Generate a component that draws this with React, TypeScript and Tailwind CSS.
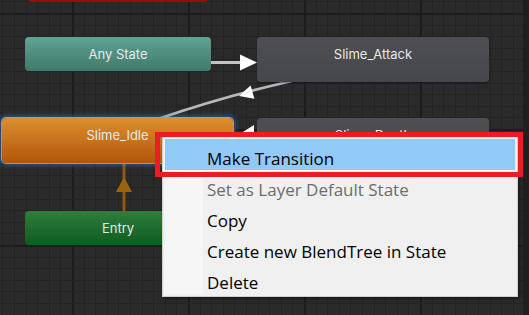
import React from 'react';

const MINOR = 11.6;

function Grid() {
  const xs: number[] = [];
  const ys: number[] = [];
  for (let x = 2.4; x < 529; x += MINOR) xs.push(x);
  for (let y = 1.4; y < 315; y += MINOR) ys.push(y);
  // every 10th minor line is a major line (x=72, y=13 are majors)
  const isMajorX = (x: number) => Math.abs(((x - 72) / (MINOR * 10)) - Math.round((x - 72) / (MINOR * 10))) < 0.01;
  const isMajorY = (y: number) => Math.abs(((y - 13) / (MINOR * 10)) - Math.round((y - 13) / (MINOR * 10))) < 0.01;
  return (
    <svg className="absolute inset-0" width="529" height="315">
      {xs.map((x) => (
        <rect key={'x' + x} x={Math.round(x)} y={0} width={isMajorX(x) ? 2 : 1} height={315} fill={isMajorX(x) ? '#1c1c1c' : '#232323'} />
      ))}
      {ys.map((y) => (
        <rect key={'y' + y} x={0} y={Math.round(y)} width={529} height={isMajorY(y) ? 2 : 1} fill={isMajorY(y) ? '#1c1c1c' : '#232323'} />
      ))}
    </svg>
  );
}

function Transitions() {
  return (
    <svg className="absolute inset-0" width="529" height="315">
      {/* Any State -> Slime_Attack */}
      <line x1="211" y1="62.5" x2="246" y2="62.5" stroke="#c4c4c4" strokeWidth="3" />
      <polygon points="257,62.5 240,54.5 240,70.5" fill="#ffffff" />
      {/* Slime_Attack -> Slime_Idle */}
      <path d="M292 81 Q225 96 158 119" stroke="#b8b8b8" strokeWidth="2.5" fill="none" />
      <polygon points="239,96 254.4,98.8 250.6,85.4" fill="#ffffff" />
      {/* Slime_Idle <- second state */}
      <polygon points="238,135 254,125 254,145" fill="#ffffff" />
      {/* Entry -> Slime_Idle */}
      <line x1="124" y1="164" x2="124" y2="211" stroke="#8e5b0e" strokeWidth="3" />
      <polygon points="124,177 116,192 132,192" fill="#9a630f" />
    </svg>
  );
}

const label = "text-[13px] leading-[34px] text-center text-[#e8e8e8] font-['Inter','Noto_Sans',sans-serif]";

export default function App() {
  return (
    <div className="relative w-[529px] h-[315px] overflow-hidden bg-[#2a2a2a]">
      <Grid />
      <div className="absolute right-0 top-0 w-[6px] h-full bg-[#1f1f1f]" />
      <Transitions />

      {/* off-screen state peeking in at the top */}
      <div className="absolute left-[28px] top-[-32px] w-[180px] h-[34px] rounded-[4px] bg-[#9b0d0d]" />

      <div className={`absolute left-[25px] top-[37px] w-[186px] h-[34px] rounded-[4px] bg-gradient-to-b from-[#62a393] to-[#3e7a6b] ${label}`}>
        Any State
      </div>

      <div className="absolute left-[257px] top-[37px] w-[232px] h-[45px] rounded-[4px] bg-gradient-to-b from-[#4e4f52] to-[#46474a] shadow-[0_1px_2px_rgba(0,0,0,0.4)]">
        <div className={label}>Slime_Attack</div>
      </div>

      <div className="absolute left-[257px] top-[118px] w-[232px] h-[45px] rounded-[4px] bg-gradient-to-b from-[#4e4f52] to-[#46474a]">
        <div className={label}>Slime_Death</div>
      </div>

      <div className="absolute left-[2px] top-[118px] w-[231px] h-[45px] rounded-[4px] bg-gradient-to-b from-[#dc8f2e] to-[#b25506] ring-1 ring-[#5aaaff] shadow-[0_0_5px_2px_rgba(50,140,255,0.55)]">
        <div className={label}>Slime_Idle</div>
      </div>

      <div className={`absolute left-[25px] top-[211px] w-[186px] h-[34px] rounded-[4px] bg-gradient-to-b from-[#2f7e3d] to-[#0c5d1f] ${label}`}>
        Entry
      </div>

      {/* context menu */}
      <div className="absolute left-[162px] top-[136px] w-[356px] h-[161px] border border-[#cfcfcf] bg-[#f0f0f0] p-[2px] shadow-[2px_2px_3px_rgba(0,0,0,0.35)] font-['Open_Sans','Noto_Sans',sans-serif] text-[17px]">
        <div className="absolute left-[2px] top-[2px] bottom-[2px] w-[38px] bg-[#f6f6f6]" />
        <div className="relative flex flex-col">
          <div className="h-[31px] pt-[8px] leading-[23px] pl-[42px] bg-[#91c9f7] text-black">Make Transition</div>
          <div className="h-[31px] pt-[8px] leading-[23px] pl-[42px] text-[#6d6d6d]">Set as Layer Default State</div>
          <div className="h-[31px] pt-[8px] leading-[23px] pl-[42px] text-black">Copy</div>
          <div className="h-[31px] pt-[8px] leading-[23px] pl-[42px] text-black">Create new BlendTree in State</div>
          <div className="h-[31px] pt-[8px] leading-[23px] pl-[42px] text-black">Delete</div>
        </div>
      </div>

      {/* highlight box drawn over the screenshot */}
      <div className="absolute left-[155px] top-[132px] w-[368px] h-[45px] border-[5px] border-[#ec1c24]" />
    </div>
  );
}
